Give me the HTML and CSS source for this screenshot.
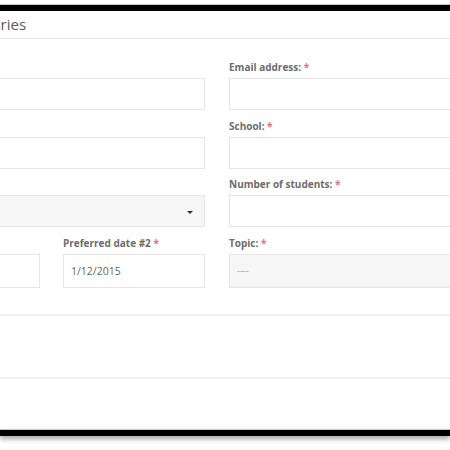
FILE: index.html
```html
<!DOCTYPE html>
<html>
<head>
<meta charset="utf-8">
<link rel="stylesheet" href="styles.css">
</head>
<body>
<div class="frame">
  <div class="bar-top"></div>
  <div class="panel">
    <div class="header"><h2 class="title">Inquiries</h2></div>
    <form class="form">
      <div class="field">
        <label class="label">Name: <span class="req">*</span></label>
        <input class="input" type="text">
      </div>
      <div class="field">
        <label class="label">Email address: <span class="req">*</span></label>
        <input class="input" type="text">
      </div>
      <div class="field">
        <label class="label">Phone: <span class="req">*</span></label>
        <input class="input" type="text">
      </div>
      <div class="field">
        <label class="label">School: <span class="req">*</span></label>
        <input class="input" type="text">
      </div>
      <div class="field">
        <label class="label">Grade: <span class="req">*</span></label>
        <div class="input select"><span class="caret"></span></div>
      </div>
      <div class="field">
        <label class="label">Number of students: <span class="req">*</span></label>
        <input class="input" type="text">
      </div>
      <div class="dates">
        <div class="field">
          <label class="label">Date #1 <span class="req">*</span></label>
          <input class="input" type="text" value="1/11/2015">
        </div>
        <div class="field">
          <label class="label">Preferred date #2 <span class="req">*</span></label>
          <input class="input" type="text" value="1/12/2015">
        </div>
      </div>
      <div class="field">
        <label class="label">Topic: <span class="req">*</span></label>
        <div class="input select topic">----</div>
      </div>
    </form>
    <div class="section"></div>
    <div class="section tall"></div>
  </div>
  <div class="bar-bottom"></div>
</div>
</body>
</html>
```
FILE: styles.css
```css
html, body {
  margin: 0;
  padding: 0;
  background: #fff;
  overflow: hidden;
  width: 450px;
  height: 450px;
}
.frame {
  padding-top: 4px;
  font-family: "Open Sans", "Liberation Sans", sans-serif;
}
.bar-top {
  height: 6px;
  background: #000;
  border-top: 1px solid #c8c8c8;
}
.panel {
  background: #fff;
}
.header {
  height: 27px;
  border-bottom: 1px solid #e4e4e4;
  display: flex;
  align-items: center;
}
.title {
  margin: 0 0 0 -35px;
  font-size: 15px;
  font-weight: 400;
  color: #5a5a5a;
  line-height: 27px;
}
.form {
  margin-left: -102px;
  padding-top: 21px;
  display: grid;
  grid-template-columns: 307px 307px;
  column-gap: 24px;
  row-gap: 8.5px;
}
.field {
  display: flex;
  flex-direction: column;
}
.label {
  font-size: 10px;
  font-weight: 700;
  color: #6d6d6d;
  line-height: 14px;
  height: 14px;
  margin-bottom: 4px;
  white-space: nowrap;
}
.req {
  color: #e8707a;
}
.input {
  box-sizing: border-box;
  height: 32px;
  border: 1px solid #e6e6e6;
  background: #fff;
  font-family: "Open Sans", "Liberation Sans", sans-serif;
  font-size: 10.5px;
  color: #666;
  padding: 0 7px;
  margin: 0;
  outline: none;
}
.dates .input {
  height: 34px;
}
.select {
  background: #f6f6f6;
  position: relative;
  display: flex;
  align-items: center;
}
.caret {
  position: absolute;
  right: 11px;
  top: 15px;
  width: 0;
  height: 0;
  border-left: 3px solid transparent;
  border-right: 3px solid transparent;
  border-top: 3px solid #333;
}
.topic {
  height: 34px;
  color: #999;
  font-size: 9px;
}
.dates {
  display: grid;
  grid-template-columns: 142px 142px;
  column-gap: 23px;
}
.section {
  margin-top: 26px;
  height: 0;
  border-top: 2px solid #f0f0f0;
}
.section.tall {
  margin-top: 61px;
}
.bar-bottom {
  margin-top: 50px;
  height: 6px;
  background: #000;
  border-top: 1px solid #c8c8c8;
  box-shadow: 0 3px 5px rgba(0,0,0,0.35);
}
```
